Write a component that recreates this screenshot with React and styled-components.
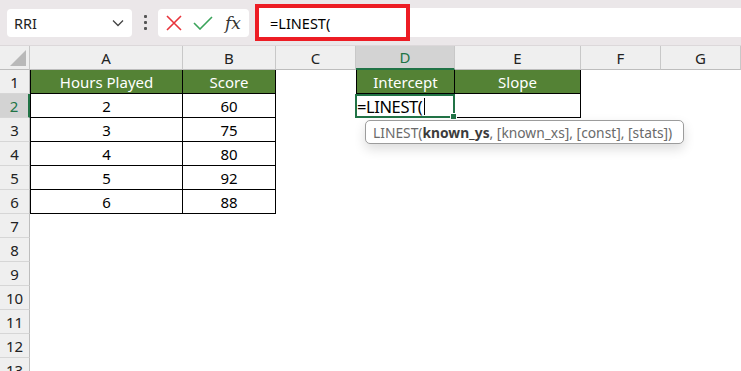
import React from "react";
import styled, { createGlobalStyle } from "styled-components";

const Global = createGlobalStyle`
  body { margin: 0; background: #fff; }
  * { box-sizing: border-box; }
`;

const Page = styled.div`
  width: 741px;
  height: 371px;
  overflow: hidden;
  font-family: "Noto Sans", "Open Sans", sans-serif;
  color: #000;
  position: relative;
`;

const Toolbar = styled.div`
  height: 46px;
  background: #ebe7e9;
  display: flex;
  align-items: center;
  padding-left: 7px;
  border-bottom: 1px solid #dcd8da;
`;

const NameBox = styled.div`
  width: 125px;
  height: 28px;
  background: #fff;
  border-radius: 4px;
  display: flex;
  align-items: center;
  justify-content: space-between;
  padding: 0 8px 0 7px;
  font-size: 14.5px;
  color: #222;
`;

const Dots = styled.div`
  width: 26px;
  display: flex;
  flex-direction: column;
  align-items: center;
  gap: 3px;
  span {
    width: 3px;
    height: 3px;
    background: #555;
    border-radius: 1px;
  }
`;

const Buttons = styled.div`
  width: 91px;
  height: 28px;
  background: #fff;
  border-radius: 4px;
  display: flex;
  align-items: center;
  padding-left: 8px;
  gap: 11px;
`;

const Fx = styled.span`
  font-family: "DejaVu Serif", "Liberation Serif", serif;
  font-style: italic;
  font-size: 17px;
  color: #333;
  margin-left: 1px;
`;

const FormulaWrap = styled.div`
  flex: 1;
  margin-left: 6px;
  height: 29px;
  background: #fff;
  display: flex;
  align-items: center;
  padding-left: 15px;
  font-size: 14.5px;
  position: relative;
`;

const Highlight = styled.div`
  position: absolute;
  left: 0;
  top: -4px;
  width: 155px;
  height: 37px;
  border: 4px solid #ed1c24;
`;

const Sheet = styled.div`
  display: grid;
  grid-template-columns: 30px 153px 93px 80px 99px 126px 80px 80px;
  grid-auto-rows: 24px;
  position: relative;
`;

const Corner = styled.div`
  background: #efefef;
  border-right: 1px solid #c8c8c8;
  border-bottom: 1px solid #bdbdbd;
  position: relative;
  &::after {
    content: "";
    position: absolute;
    right: 3px;
    bottom: 3px;
    border-style: solid;
    border-width: 0 0 16px 16px;
    border-color: transparent transparent #b9b9b9 transparent;
  }
`;

const ColHead = styled.div`
  background: ${(p) => (p.$sel ? "#d3d3d3" : "#efefef")};
  color: ${(p) => (p.$sel ? "#217346" : "#222")};
  border-right: 1px solid #c8c8c8;
  border-bottom: ${(p) => (p.$sel ? "2px solid #217346" : "1px solid #bdbdbd")};
  display: flex;
  align-items: center;
  justify-content: center;
  font-size: 15px;
`;

const RowHead = styled.div`
  background: ${(p) => (p.$sel ? "#d3d3d3" : "#efefef")};
  color: ${(p) => (p.$sel ? "#217346" : "#222")};
  border-right: ${(p) => (p.$sel ? "2px solid #217346" : "1px solid #bdbdbd")};
  border-bottom: 1px solid #d6d6d6;
  display: flex;
  align-items: center;
  justify-content: center;
  font-size: 15px;
`;

const Cell = styled.div`
  display: flex;
  align-items: center;
  justify-content: center;
  font-size: 15px;
  background: ${(p) => (p.$kind === "head" ? "#548235" : "#fff")};
  color: ${(p) => (p.$kind === "head" ? "#fff" : "#000")};
  border-right: ${(p) => (p.$kind ? "1px solid #000" : "none")};
  border-bottom: ${(p) => (p.$kind ? "1px solid #000" : "none")};
  border-left: ${(p) => (p.$first ? "1px solid #000" : "none")};
`;

const ActiveCell = styled.div`
  border: 2px solid #217346;
  display: flex;
  align-items: center;
  font-size: 16.5px;
  letter-spacing: -0.4px;
  position: relative;
  margin-left: -1px;
  &::after {
    content: "";
    position: absolute;
    right: -4px;
    bottom: -4px;
    width: 5px;
    height: 5px;
    background: #217346;
    border: 1px solid #fff;
  }
`;

const Caret = styled.span`
  display: inline-block;
  width: 1px;
  height: 17px;
  background: #000;
  margin-left: 2px;
`;

const Tip = styled.div`
  position: absolute;
  left: 365px;
  top: 74px;
  width: 319px;
  height: 24px;
  border: 1px solid #9c9c9c;
  border-radius: 5px;
  background: #fff;
  box-shadow: 0 5px 12px rgba(0, 0, 0, 0.14);
  display: flex;
  align-items: center;
  padding-left: 7px;
  font-size: 13.8px;
  color: #6a6a6a;
  white-space: nowrap;
  b {
    color: #3c3c3c;
    font-weight: 700;
  }
`;

const cols = ["A", "B", "C", "D", "E", "F", "G"];
const data = [
  ["Hours Played", "Score"],
  [2, 60],
  [3, 75],
  [4, 80],
  [5, 92],
  [6, 88],
];

function Row({ n }) {
  const r = data[n - 1];
  const head = n === 1;
  return (
    <>
      <RowHead $sel={n === 2}>{n}</RowHead>
      <Cell $kind={r ? (head ? "head" : "data") : null} $first={!!r}>{r && r[0]}</Cell>
      <Cell $kind={r ? (head ? "head" : "data") : null}>{r && r[1]}</Cell>
      <Cell />
      {n === 1 && <Cell $kind="head" $first>Intercept</Cell>}
      {n === 2 && (
        <ActiveCell>
          =LINEST(<Caret />
        </ActiveCell>
      )}
      {n > 2 && <Cell />}
      {n === 1 && <Cell $kind="head">Slope</Cell>}
      {n === 2 && <Cell $kind="data" />}
      {n > 2 && <Cell />}
      <Cell />
      <Cell />
    </>
  );
}

export default function App() {
  return (
    <Page>
      <Global />
      <Toolbar>
        <NameBox>
          RRI
          <svg width="12" height="8" viewBox="0 0 12 8">
            <path d="M1 1.5 L6 6.5 L11 1.5" fill="none" stroke="#444" strokeWidth="1.3" />
          </svg>
        </NameBox>
        <Dots>
          <span />
          <span />
          <span />
        </Dots>
        <Buttons>
          <svg width="16" height="16" viewBox="0 0 16 16">
            <path d="M1 1 L15 15 M15 1 L1 15" stroke="#e8343c" strokeWidth="1.6" />
          </svg>
          <svg width="20" height="14" viewBox="0 0 20 14">
            <path d="M1 7 L7 13 L19 1" fill="none" stroke="#3aa35a" strokeWidth="1.6" />
          </svg>
          <Fx>fx</Fx>
        </Buttons>
        <FormulaWrap>
          =LINEST(
          <Highlight />
        </FormulaWrap>
      </Toolbar>
      <Sheet>
        <Corner />
        {cols.map((c) => (
          <ColHead key={c} $sel={c === "D"}>
            {c}
          </ColHead>
        ))}
        {Array.from({ length: 13 }, (_, i) => (
          <Row key={i} n={i + 1} />
        ))}
        <Tip>
          LINEST(<b>known_ys</b>, [known_xs], [const], [stats])
        </Tip>
      </Sheet>
    </Page>
  );
}
